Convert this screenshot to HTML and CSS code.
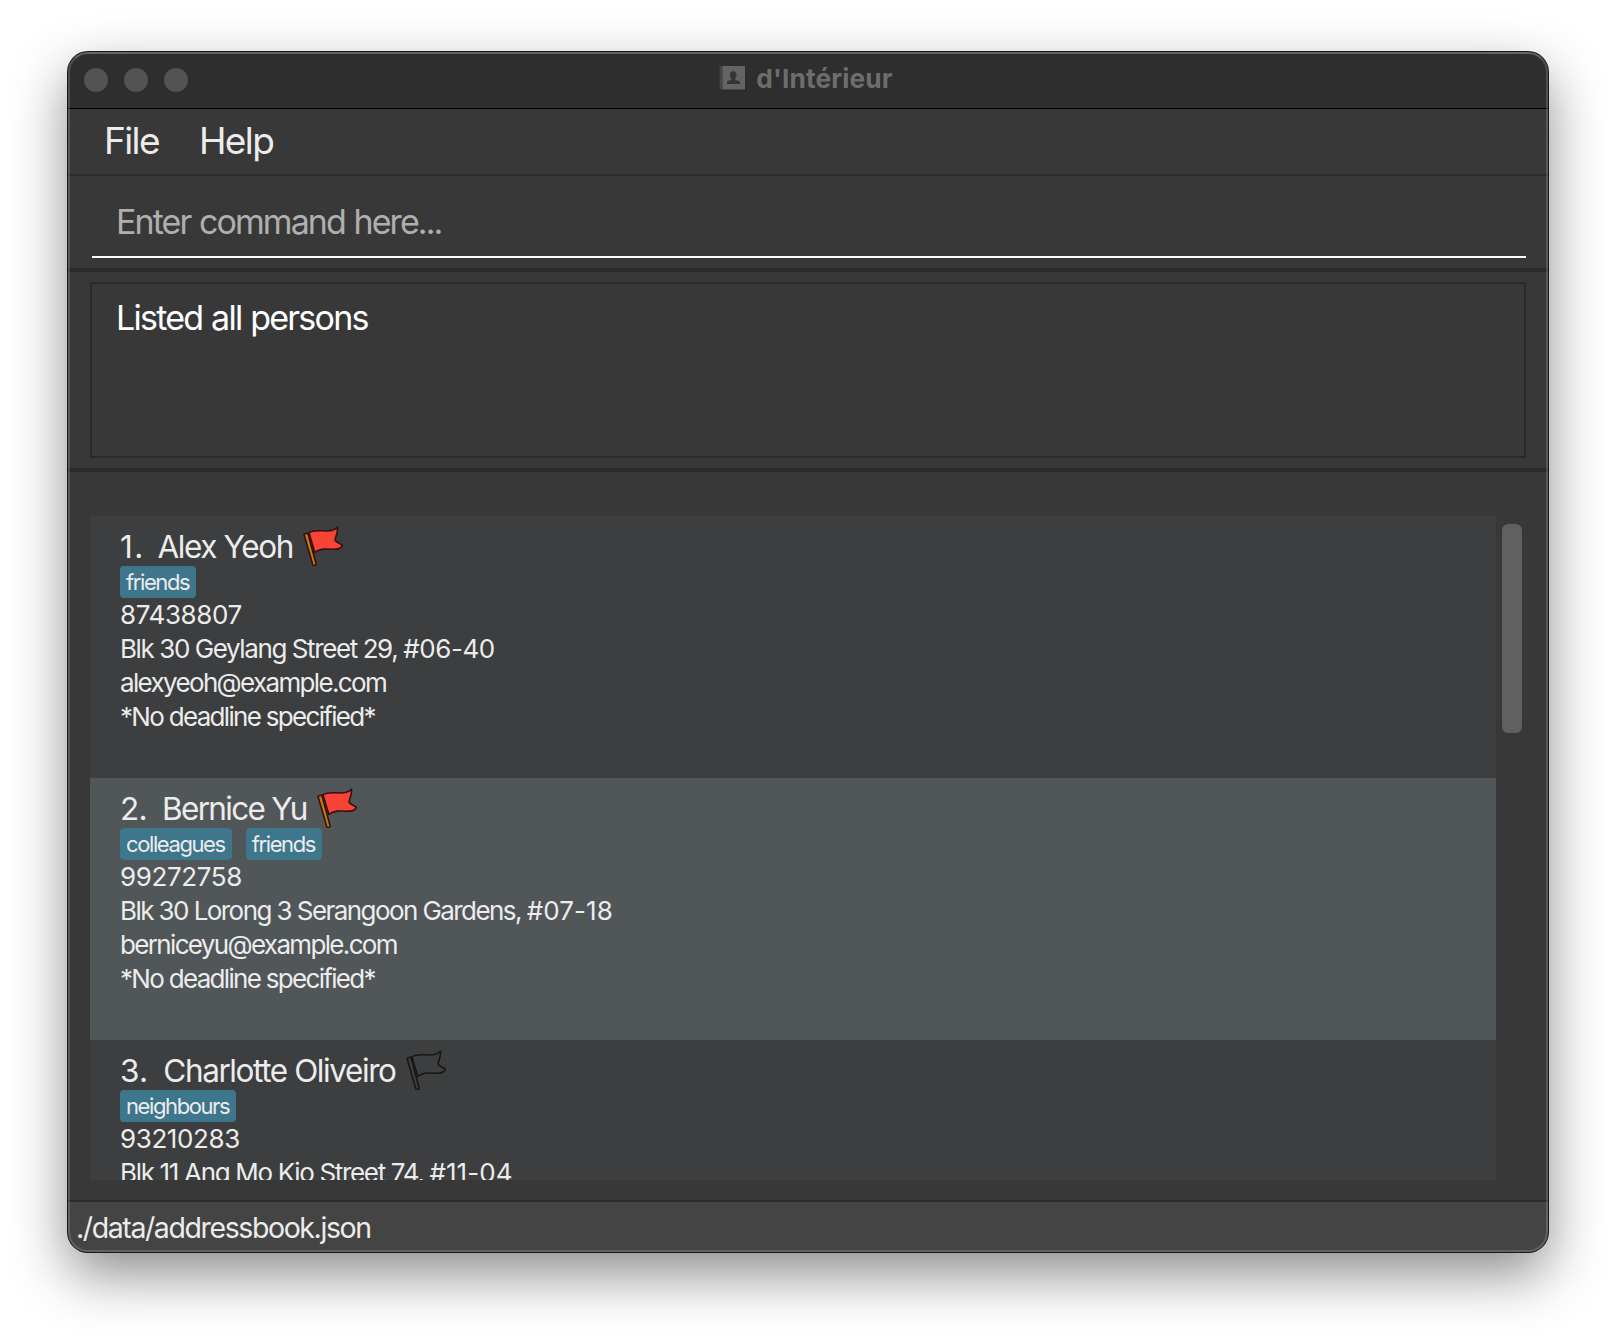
FILE: index.html
```
<!DOCTYPE html>
<html lang="en">
<head>
<meta charset="utf-8">
<title>d'Intérieur</title>
<link rel="stylesheet" href="styles.css">
</head>
<body>
<svg class="defs" aria-hidden="true">
  <symbol id="flag" viewBox="0 0 40 40">
    <path class="cloth" d="M6 6.6C13 2.3 22 6.6 29.5 4.3C32 3.6 33 2.6 34.6 1L34.3 5C34 9 32.2 11.500 32 14C33.500 16.800 37 17 39.400 19.200C38.500 22.200 33.500 23.400 29 23.300C23 22.800 17 22.200 11.800 26.500Z"/>
    <path class="pole" d="M1 8.200L4.800 7L13.200 38.200L12.400 39.300L10 39.500Z"/>
  </symbol>
</svg>
<main class="window">
  <header class="titlebar">
    <div class="lights"><i></i><i></i><i></i></div>
    <div class="title">
      <svg width="28" height="27" viewBox="0 0 28 27">
        <rect x="0" y="1" width="27" height="25" rx="1.500" fill="#292929"/>
        <rect x="0.500" y="1" width="3" height="23.500" fill="#464646"/>
        <rect x="3.500" y="1" width="22.500" height="23.500" fill="#646464"/>
        <path d="M8 19V17C8.500 15.500 12 15.500 12.500 14.300C11.200 12.500 10.800 11 10.900 9.300C11 7.300 12.400 6.300 14.200 6.300S17.400 7.300 17.500 9.300C17.600 11 17.200 12.500 15.900 14.300C16.400 15.500 20.500 15.500 21 17V19Z" fill="#353535"/>
      </svg>
      <span>d'Intérieur</span>
    </div>
  </header>
  <nav class="menubar"><span>File</span><span>Help</span></nav>
  <section class="command"><div class="field">Enter command here...</div></section>
  <section class="result"><div class="display">Listed all persons</div></section>
  <section class="persons">
    <div class="list">
      <article class="card">
        <div class="name"><span class="index one">1.</span><span class="alex">Alex Yeoh</span><svg class="flag red"><use href="#flag"/></svg></div>
        <div class="tags"><span class="tag">friends</span></div>
        <p class="phone">87438807</p>
        <p class="address">Blk 30 Geylang Street 29, <span class="unit">#06-40</span></p>
        <p class="email">alexyeoh@example.com</p>
        <p class="deadline">*No deadline specified*</p>
      </article>
      <article class="card alt">
        <div class="name"><span class="index two">2.</span><span class="bernice">Bernice Yu</span><svg class="flag red"><use href="#flag"/></svg></div>
        <div class="tags"><span class="tag">colleagues</span><span class="tag">friends</span></div>
        <p class="phone">99272758</p>
        <p class="address long">Blk 30 Lorong 3 Serangoon Gardens, <span class="unit loose">#07-18</span></p>
        <p class="email">berniceyu@example.com</p>
        <p class="deadline">*No deadline specified*</p>
      </article>
      <article class="card">
        <div class="name"><span class="index three">3.</span><span>Charlotte Oliveiro</span><svg class="flag"><use href="#flag"/></svg></div>
        <div class="tags"><span class="tag">neighbours</span></div>
        <p class="phone">93210283</p>
        <p class="address digits">Blk 11 Ang Mo Kio Street 74, <span class="unit loose">#11-04</span></p>
      </article>
    </div>
    <div class="scroll"><div class="thumb"></div></div>
  </section>
  <footer class="status">./data/addressbook.json</footer>
</main>
</body>
</html>
```
FILE: styles.css
```
* { box-sizing: border-box; }
body {
  margin: 0;
  padding: 52px 68px;
  height: 1336px;
  overflow: hidden;
  background: #fff;
  color: #ececec;
  font-family: Inter, "Liberation Sans", sans-serif;
  font-kerning: normal;
  white-space: nowrap;
}
.defs { display: none; }
p { margin: 0; }
.window {
  position: relative;
  display: flex;
  flex-direction: column;
  width: 1480px;
  height: 1200px;
  border-radius: 20px;
  overflow: hidden;
  background: #383838;
  box-shadow: 0 0 0 1px #181818, 0 22px 56px rgba(0, 0, 0, .46);
}
/* translucent rim drawn over the window's contents */
.window::after {
  content: "";
  position: absolute;
  inset: 0;
  border: 2px solid rgba(255, 255, 255, .16);
  border-top-color: rgba(255, 255, 255, .26);
  border-radius: 20px;
}
.titlebar {
  display: grid;
  grid-template-columns: 1fr auto 1fr;
  align-items: center;
  height: 57px;
  padding: 0 16px 2px;
  background: #2e2e2e;
  border-bottom: 1px solid #000;
}
.lights { display: flex; gap: 16px; padding-top: 1px; }
.lights i { width: 24px; height: 24px; border-radius: 50%; background: #525252; }
.title {
  display: flex;
  align-items: center;
  gap: 9px;
  margin-right: 4px;
  padding-bottom: 2px;
  color: #6d6d6d;
  font-size: 26.3px;
  font-weight: 700;
  letter-spacing: .12px;
}
.menubar {
  display: flex;
  gap: 40px;
  height: 67px;
  padding: 0 36px;
  border-bottom: 2px solid #2b2b2b;
  font-size: 37px;
  line-height: 63px;
  letter-spacing: -1.6px;
}
.command { height: 96px; padding: 0 22px 10px 24px; border-bottom: 4px solid #2b2b2b; }
.field {
  height: 82px;
  padding: 12px 24px 0;
  border-bottom: 2px solid #fff;
  color: #afafaf;
  font-size: 34px;
  line-height: 68px;
  letter-spacing: -1.9px;
  word-spacing: .8px;
}
.result { height: 200px; padding: 10px 22px; border-bottom: 4px solid #2b2b2b; }
.display {
  height: 176px;
  padding: 14px 24px;
  border: 2px solid #2b2b2b;
  color: #fff;
  font-size: 34px;
  line-height: 40px;
  letter-spacing: -1.76px;
  word-spacing: 1px;
}
.persons { display: flex; height: 728px; padding: 44px 22px 20px; }
.list { flex: none; width: 1406px; overflow: hidden; }
.card { height: 262px; padding: 10px 30px; background: #3c3e3f; font-size: 26px; line-height: 34px; }
.alt { background: #515658; }
.name { display: flex; align-items: center; height: 40px; font-size: 31.5px; line-height: 40px; letter-spacing: -1.41px; }
.name span { padding-top: 1px; }
.index { margin-right: 14px; }
.one { margin-right: 12.5px; letter-spacing: 1.5px; }
.two { margin-right: 15.2px; letter-spacing: -.7px; }
.three { margin-right: 15px; letter-spacing: .25px; }
.alex { letter-spacing: -1.38px; }
.bernice { letter-spacing: -1.69px; }
.flag {
  width: 40px;
  height: 40px;
  margin-left: 10.5px;
  overflow: visible;
  fill: none;
  stroke: #171717;
  stroke-width: 1.6px;
  stroke-linejoin: round;
}
.red { fill: #f74436; stroke: #35100e; }
.red { --pole: #c47a0c; }
.pole { fill: var(--pole, none); }
.tags { display: flex; gap: 14px; height: 32px; }
.tag { padding: 0 7px 0 6px; border-radius: 4px; background: #3e768c; font-size: 22px; line-height: 32px; letter-spacing: -1.4px; }
.phone { letter-spacing: -.4px; }
.address { letter-spacing: -1.41px; }
.long { letter-spacing: -1.57px; }
.digits { letter-spacing: -1.33px; }
.unit { letter-spacing: -.4px; }
.loose { letter-spacing: .08px; }
.email { letter-spacing: -1.66px; }
.deadline { letter-spacing: -1.69px; }
.scroll { padding: 8px 0 0 6px; }
.thumb { width: 20px; height: 209px; border-radius: 6px; background: #606060; }
.status {
  height: 52px;
  padding-left: 8px;
  border-top: 2px solid #2b2b2b;
  background: #444;
  font-size: 28.5px;
  line-height: 52px;
  letter-spacing: -1.4px;
}
```
